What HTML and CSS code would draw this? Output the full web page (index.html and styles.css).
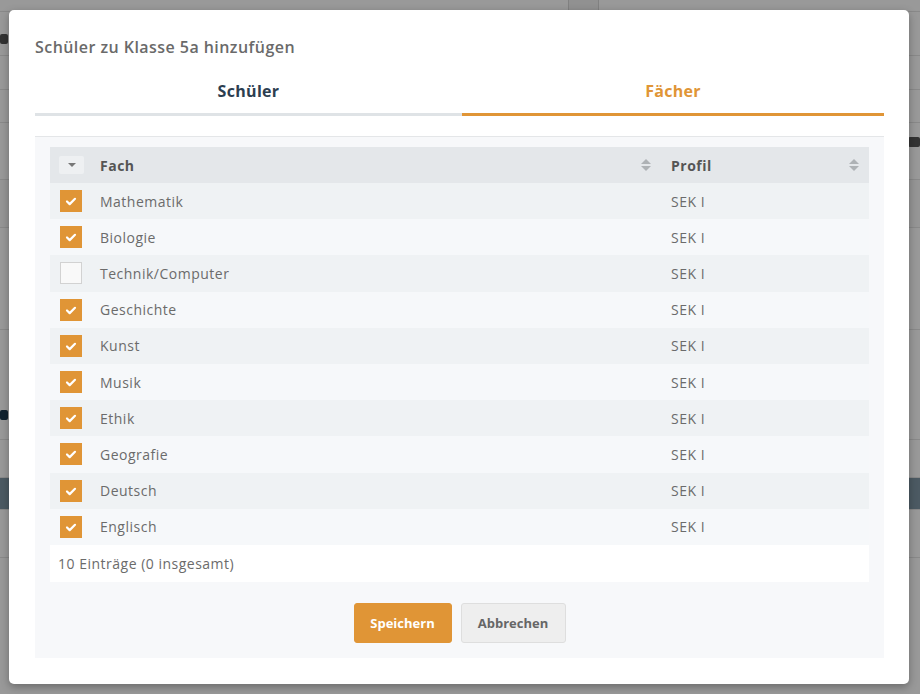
FILE: index.html
```html
<!DOCTYPE html>
<html lang="de">
  <head>
    <meta charset="UTF-8" />
    <meta name="viewport" content="width=device-width, initial-scale=1.0" />
    <title>Klasse 5a</title>
    <link rel="stylesheet" href="styles.css">
  </head>
  <body>
    <!-- Seite im Hintergrund (abgedunkelt) -->
    <div class="page">
      <div class="page-top"><span class="top-box"></span></div>
      <div class="page-row h44"><span class="blob first"></span></div>
      <div class="page-row h34"></div>
      <div class="page-row h33"></div>
      <div class="page-row h57"><span></span><span class="blob right"></span></div>
      <div class="page-row h48 light"></div>
      <div class="page-row h102"></div>
      <div class="page-row h110"><span class="blob navy"></span></div>
      <div class="page-row h38"></div>
      <div class="page-row dark-bar"></div>
      <div class="page-row h48"></div>
    </div>
    <div class="overlay"></div>

    <div class="modal">
      <h1 class="modal-title">Schüler zu Klasse 5a hinzufügen</h1>

      <div class="tabs">
        <div class="tab">Schüler</div>
        <div class="tab active">Fächer</div>
      </div>

      <div class="panel">
        <table class="grid">
          <colgroup>
            <col class="col-check" />
            <col class="col-fach" />
            <col />
          </colgroup>
          <thead>
            <tr>
              <th><span class="select-menu"><svg width="8" height="4" viewBox="0 0 8 4"><path d="M0 0h8L4 4z" fill="#777"/></svg></span></th>
              <th><div class="th-inner">Fach<span class="sort"></span></div></th>
              <th><div class="th-inner">Profil<span class="sort"></span></div></th>
            </tr>
          </thead>
          <tbody>
            <tr><td><span class="cb on"></span></td><td>Mathematik</td><td>SEK I</td></tr>
            <tr><td><span class="cb on"></span></td><td>Biologie</td><td>SEK I</td></tr>
            <tr><td><span class="cb"></span></td><td>Technik/Computer</td><td>SEK I</td></tr>
            <tr><td><span class="cb on"></span></td><td>Geschichte</td><td>SEK I</td></tr>
            <tr><td><span class="cb on"></span></td><td>Kunst</td><td>SEK I</td></tr>
            <tr><td><span class="cb on"></span></td><td>Musik</td><td>SEK I</td></tr>
            <tr><td><span class="cb on"></span></td><td>Ethik</td><td>SEK I</td></tr>
            <tr><td><span class="cb on"></span></td><td>Geografie</td><td>SEK I</td></tr>
            <tr><td><span class="cb on"></span></td><td>Deutsch</td><td>SEK I</td></tr>
            <tr><td><span class="cb on"></span></td><td>Englisch</td><td>SEK I</td></tr>
          </tbody>
          <tfoot>
            <tr><td colspan="3">10 Einträge (0 insgesamt)</td></tr>
          </tfoot>
        </table>

        <div class="actions">
          <button type="button" class="btn btn-primary">Speichern</button>
          <button type="button" class="btn btn-default">Abbrechen</button>
        </div>
      </div>
    </div>
  </body>
</html>
```

FILE: styles.css
```css
* {
  box-sizing: border-box;
}
body {
  margin: 0;
  width: 920px;
  height: 694px;
  overflow: hidden;
  font-family: "Open Sans", "Noto Sans", sans-serif;
  background: #fff;
  position: relative;
}

/* Hintergrundseite */
.page {
  width: 920px;
  height: 694px;
  background: #fff;
}
.page-top {
  height: 12px;
  border-bottom: 1px solid #e4e4e4;
  padding-left: 568px;
}
.top-box {
  display: block;
  width: 31px;
  height: 11px;
  border-left: 1px solid #d8d8d8;
  border-right: 1px solid #d8d8d8;
  background: #f2f2f2;
}
.page-row {
  border-bottom: 1px solid #e4e4e4;
  display: flex;
  justify-content: space-between;
  align-items: center;
}
.h33 { height: 33px; }
.h34 { height: 34px; }
.h38 { height: 38px; }
.h44 { height: 44px; }
.h48 { height: 48px; }
.h57 { height: 57px; }
.h102 { height: 102px; }
.h110 { height: 110px; }
.page-row.light {
  background: #fafafa;
}
.page-row.dark-bar {
  height: 32px;
  background: #7f97a6;
}
.blob {
  display: block;
  width: 8px;
  height: 10px;
  background: #555;
  border-radius: 2px;
}
.blob.first {
  margin-top: 10px;
}
.blob.right {
  width: 12px;
  margin-top: -18px;
}
.blob.navy {
  background: #1b3a4f;
  margin-top: 60px;
}
.overlay {
  position: absolute;
  inset: 0;
  background: rgba(0, 0, 0, 0.4);
}

/* Dialog */
.modal {
  position: absolute;
  left: 9px;
  top: 10px;
  width: 900px;
  height: 674px;
  background: #fff;
  border-radius: 5px;
  box-shadow: 0 3px 8px rgba(0, 0, 0, 0.3);
  padding: 26px 25px 0 26px;
}
.modal-title {
  margin: 0;
  font-size: 16px;
  line-height: 22px;
  font-weight: 600;
  letter-spacing: 0.45px;
  color: #6a6a6a;
}
.tabs {
  display: flex;
  margin-top: 14px;
}
.tab {
  flex: 0 0 427px;
  text-align: center;
  font-size: 16px;
  font-weight: 700;
  letter-spacing: 0.3px;
  color: #2c3e50;
  height: 44px;
  line-height: 38px;
  border-bottom: 3px solid #dfe3e6;
}
.tab.active {
  flex: 1;
  color: #e09536;
  border-bottom-color: #e09536;
}
.panel {
  margin-top: 20px;
  background: #f7f8fa;
  border-top: 1px solid #e4e6e8;
  padding: 10px 15px 15px;
}

/* Tabelle */
.grid {
  width: 100%;
  table-layout: fixed;
  border-collapse: collapse;
  font-size: 14px;
  letter-spacing: 0.5px;
  color: #6b6b6b;
}
.col-check {
  width: 40px;
}
.col-fach {
  width: 571px;
}
.grid th {
  background: #e4e7ea;
  height: 36px;
  text-align: left;
  font-weight: 700;
  color: #555;
  padding: 0 10px;
}
.grid td {
  height: 36.2px;
  padding: 0 10px;
}
.th-inner {
  display: flex;
  justify-content: space-between;
  align-items: center;
}
.select-menu {
  display: flex;
  align-items: center;
  justify-content: center;
  width: 25px;
  height: 18px;
  margin-left: -1px;
  background: #eef0f2;
  border-radius: 2px;
}
.sort {
  display: flex;
  flex-direction: column;
  gap: 2px;
}
.sort::before,
.sort::after {
  content: "";
  border-left: 5px solid transparent;
  border-right: 5px solid transparent;
}
.sort::before {
  border-bottom: 5px solid #aeb2b5;
}
.sort::after {
  border-top: 5px solid #aeb2b5;
}
.grid tbody tr:nth-child(odd) td {
  background: #eff2f4;
}
.grid tbody tr:nth-child(even) td {
  background: #f6f8fa;
}
.cb {
  display: block;
  width: 22px;
  height: 22px;
  background: #f9f9f9;
  border: 1px solid #d2d2d2;
}
.cb.on {
  background: #e09536 url("data:image/svg+xml;utf8,<svg xmlns='http://www.w3.org/2000/svg' width='22' height='22'><path d='M7 11.5l2.7 2.6 5.3-5.3' fill='none' stroke='white' stroke-width='2.2' stroke-linecap='round' stroke-linejoin='round'/></svg>") center no-repeat;
  border: none;
}
.grid tfoot td {
  background: #fff;
  height: 37px;
  padding: 0 8px;
  color: #6b6b6b;
}

/* Buttons */
.actions {
  display: flex;
  justify-content: center;
  gap: 9px;
  margin-top: 21px;
}
.btn {
  font-family: inherit;
  font-size: 13px;
  font-weight: 700;
  height: 40px;
  padding: 0 15px;
  border-radius: 3px;
  cursor: pointer;
}
.btn-primary {
  background: #e09536;
  border: 1px solid #e09536;
  color: #fff;
  width: 98px;
}
.btn-default {
  background: #eeeeee;
  border: 1px solid #dedede;
  color: #666;
  width: 105px;
}
```
